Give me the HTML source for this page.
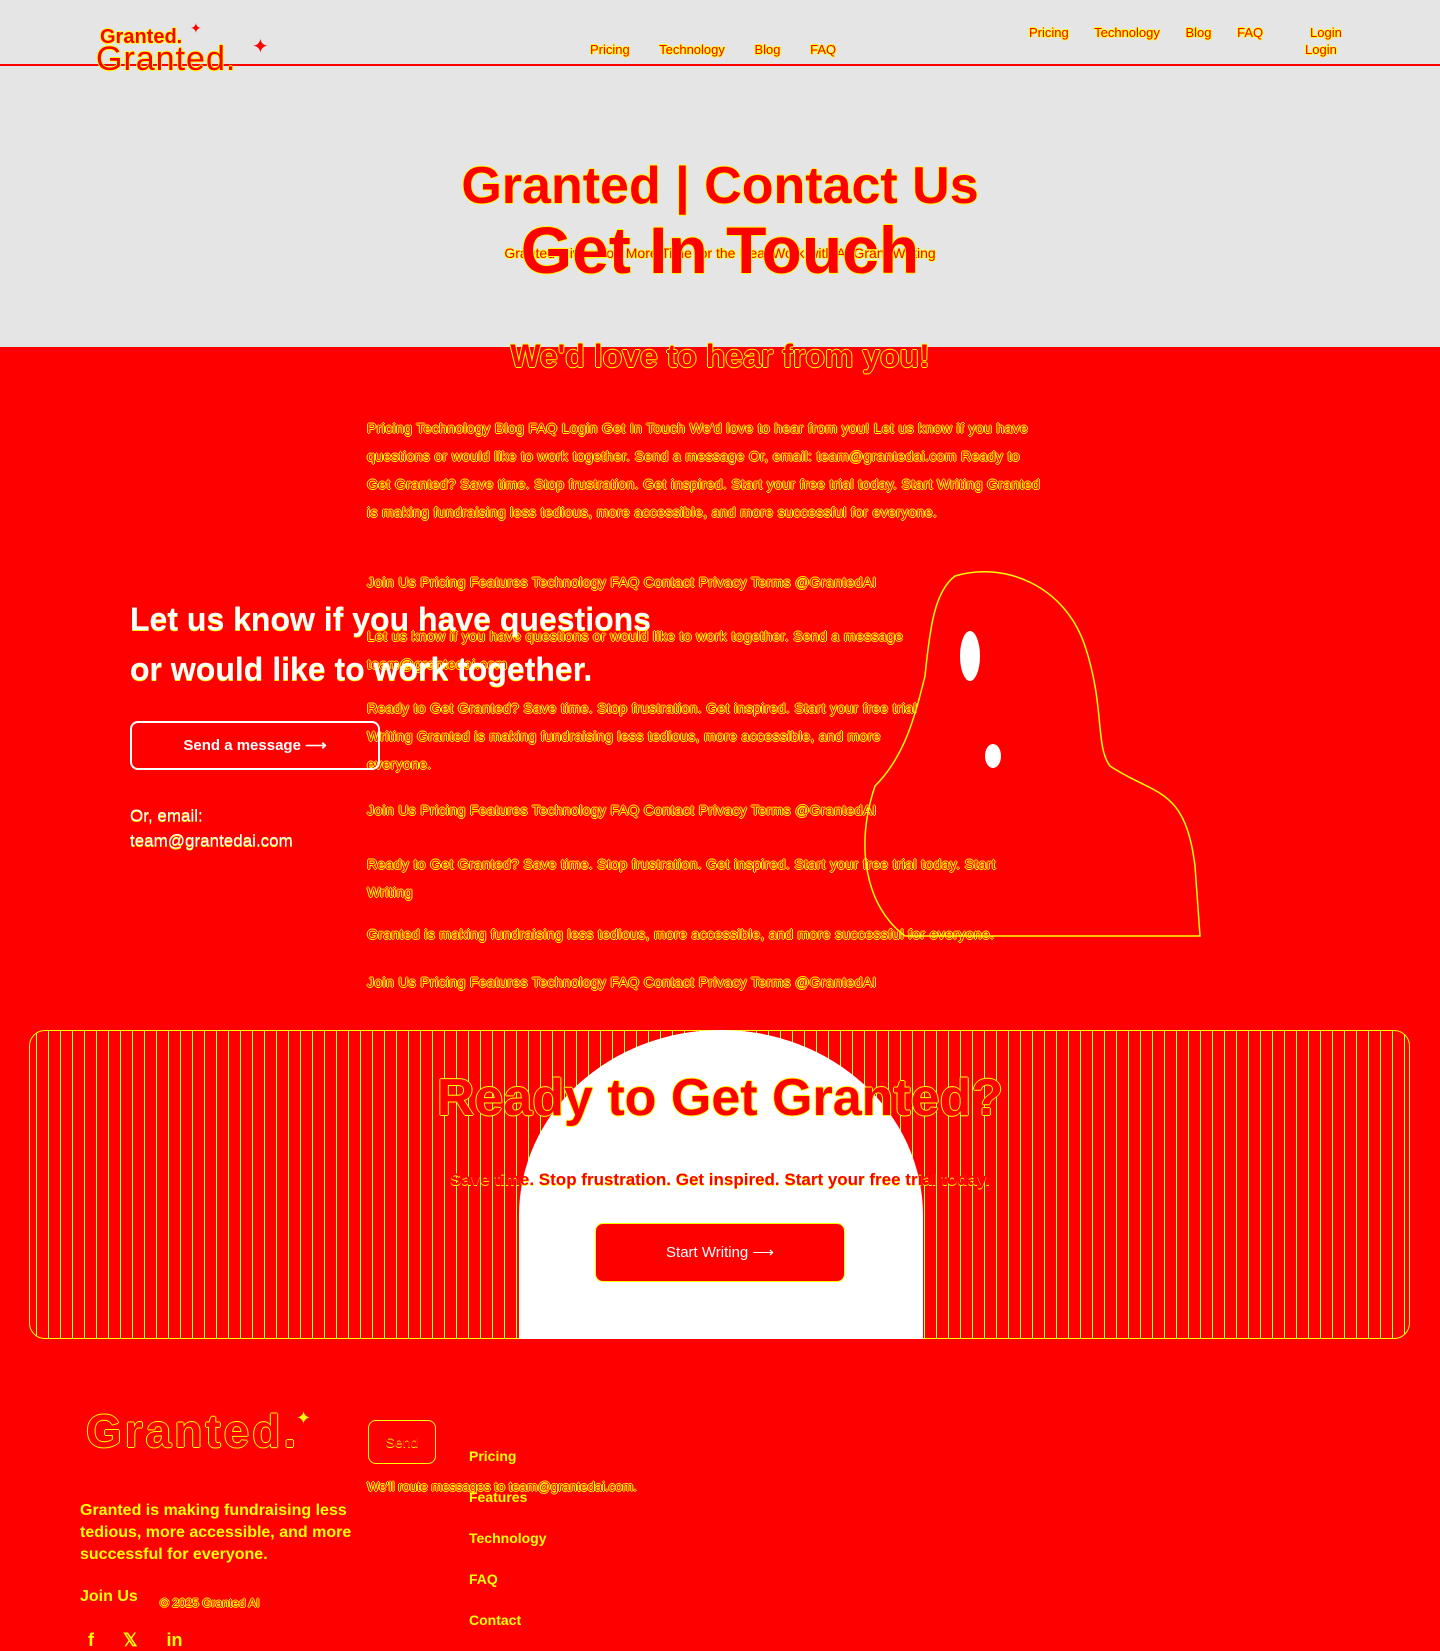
<!DOCTYPE html>
<html><head><meta charset="utf-8"><style>
*{margin:0;padding:0;box-sizing:border-box}
body{width:1440px;height:1646px;overflow:hidden;background:#ff0000;font-family:"Liberation Sans",sans-serif;position:relative}
.a{position:absolute;white-space:nowrap}
.ol{color:#ff0000;text-shadow:1px 0 #ff0,-1px 0 #ff0,0 1px #ff0,0 -1px #ff0}
.y{color:#ff0}
.p{letter-spacing:0.35px}
</style></head><body>
<div class="a" style="left:0;top:0;width:1440px;height:347px;background:#e5e5e5"></div>
<div class="a" style="left:0;top:64px;width:1440px;height:2px;background:#f00"></div>
<div class="a ol" style="left:100px;top:26px;font-size:20px;font-weight:bold">Granted.</div>
<div class="a ol" style="left:96px;top:40px;font-size:34px;letter-spacing:1px">Granted.</div>
<div class="a" style="left:190px;top:20px;color:#f00;font-size:14px">✦</div>
<div class="a" style="left:252px;top:34px;color:#f00;font-size:20px">✦</div>
<div class="a ol" style="left:590px;top:42px;font-size:13px;word-spacing:26px">Pricing Technology Blog FAQ</div>
<div class="a ol" style="left:1029px;top:25px;font-size:13px;word-spacing:22px">Pricing Technology Blog FAQ</div>
<div class="a ol" style="left:1310px;top:25px;font-size:13px">Login</div>
<div class="a ol" style="left:1305px;top:42px;font-size:13px">Login</div>
<div class="a ol" style="left:0;width:1440px;text-align:center;top:156px;font-size:52px;font-weight:bold">Granted | Contact Us</div>
<div class="a ol" style="left:0;width:1440px;text-align:center;top:245px;font-size:14px">Granted Gives You More Time for the Real Work with AI Grant Writing</div>
<div class="a ol" style="left:0;width:1440px;text-align:center;top:212px;font-size:66px;font-weight:bold">Get In Touch</div>
<div class="a ol" style="left:0;width:1440px;text-align:center;top:338px;font-size:32px;font-weight:bold">We'd love to hear from you!</div>
<div class="a ol p" style="left:367px;top:414px;width:680px;white-space:normal;font-size:14px;line-height:28px">Pricing Technology Blog FAQ Login Get In Touch We'd love to hear from you! Let us know if you have questions or would like to work together. Send a message Or, email: team@grantedai.com Ready to Get Granted? Save time. Stop frustration. Get inspired. Start your free trial today. Start Writing Granted is making fundraising less tedious, more accessible, and more successful for everyone.</div>
<div class="a ol p" style="left:367px;top:574px;font-size:14px">Join Us Pricing Features Technology FAQ Contact Privacy Terms @GrantedAI</div>
<div class="a ol p" style="left:367px;top:622px;font-size:14px;line-height:28px">Let us know if you have questions or would like to work together. Send a message<br>team@grantedai.com</div>
<div class="a ol p" style="left:367px;top:694px;font-size:14px;line-height:28px">Ready to Get Granted? Save time. Stop frustration. Get inspired. Start your free trial<br>Writing Granted is making fundraising less tedious, more accessible, and more<br>everyone.</div>
<div class="a ol p" style="left:367px;top:802px;font-size:14px">Join Us Pricing Features Technology FAQ Contact Privacy Terms @GrantedAI</div>
<div class="a ol p" style="left:367px;top:850px;font-size:14px;line-height:28px">Ready to Get Granted? Save time. Stop frustration. Get inspired. Start your free trial today. Start<br>Writing</div>
<div class="a ol p" style="left:367px;top:926px;font-size:14px">Granted is making fundraising less tedious, more accessible, and more successful for everyone.</div>
<div class="a ol p" style="left:367px;top:974px;font-size:14px">Join Us Pricing Features Technology FAQ Contact Privacy Terms @GrantedAI</div>
<svg class="a" style="left:855px;top:566px" width="355" height="372" viewBox="0 0 355 372"><path d="M100 10 C150 -5 210 20 230 80 C250 140 240 180 255 200 C300 230 330 220 340 300 L345 370 L50 370 C10 340 0 280 20 220 C50 190 60 150 70 110 C75 60 80 25 100 10Z" fill="none" stroke="#ff0" stroke-width="1.5"/><ellipse cx="115" cy="90" rx="10" ry="25" fill="#fff"/><ellipse cx="138" cy="190" rx="8" ry="12" fill="#fff"/></svg>
<div class="a" style="left:130px;top:594px;color:#fff;font-size:32px;font-weight:bold;line-height:50px;text-shadow:0 1px #ff0">Let us know if you have questions<br>or would like to work together.</div>
<div class="a" style="left:130px;top:721px;width:250px;height:49px;border:2px solid #fff;border-radius:8px;color:#fff;font-size:15px;font-weight:bold;text-align:center;line-height:45px">Send a message ⟶</div>
<div class="a" style="left:130px;top:803px;color:#fff;font-size:17px;line-height:25px;text-shadow:0 1px #ff0">Or, email:<br>team@grantedai.com</div>
<div class="a" style="left:29px;top:1030px;width:1381px;height:309px;border:1px solid #ff0;border-radius:16px;background:repeating-linear-gradient(90deg,#f00 0 6px,#ff3 6px 7px,#f00 7px 12px)"></div>
<div class="a" style="left:519px;top:1030px;width:404px;height:309px;background:#fff;border-radius:50% 50% 0 0/60% 60% 0 0"></div>
<div class="a ol" style="left:0;width:1440px;text-align:center;top:1068px;font-size:52px;font-weight:bold">Ready to Get Granted?</div>
<div class="a" style="left:0;width:1440px;text-align:center;top:1170px;font-size:17px;font-weight:bold;color:#f00;text-shadow:0 1px #ff0">Save time. Stop frustration. Get inspired. Start your free trial today.</div>
<div class="a" style="left:595px;top:1223px;width:250px;height:59px;background:#f00;border:1px solid #ff0;border-radius:8px;color:#fff;font-size:15px;text-align:center;line-height:57px">Start Writing ⟶</div>
<div class="a ol" style="left:86px;top:1404px;font-size:46px;font-weight:bold;letter-spacing:3px">Granted.</div>
<div class="a y" style="left:296px;top:1408px;font-size:18px">✦</div>
<div class="a" style="left:368px;top:1420px;width:68px;height:44px;border:1px solid #ff0;border-radius:8px;color:#f00;text-align:center;line-height:42px;font-size:14px;text-shadow:0 1px #ff0">Send</div>
<div class="a ol" style="left:367px;top:1479px;font-size:13px">We'll route messages to team@grantedai.com.</div>
<div class="a" style="left:80px;top:1500px;color:#ff0;font-size:16px;font-weight:bold;line-height:22px">Granted is making fundraising less<br>tedious, more accessible, and more<br>successful for everyone.</div>
<div class="a y" style="left:80px;top:1588px;font-size:16px;font-weight:bold">Join Us</div>
<div class="a ol" style="left:160px;top:1596px;font-size:12px">© 2025 Granted AI</div>
<div class="a" style="left:469px;top:1436px;color:#ff0;font-size:14px;font-weight:bold;line-height:41px">Pricing<br>Features<br>Technology<br>FAQ<br>Contact</div>
<div class="a y" style="left:88px;top:1630px;font-size:18px;font-weight:bold;word-spacing:24px">f 𝕏 in</div>
</body></html>
